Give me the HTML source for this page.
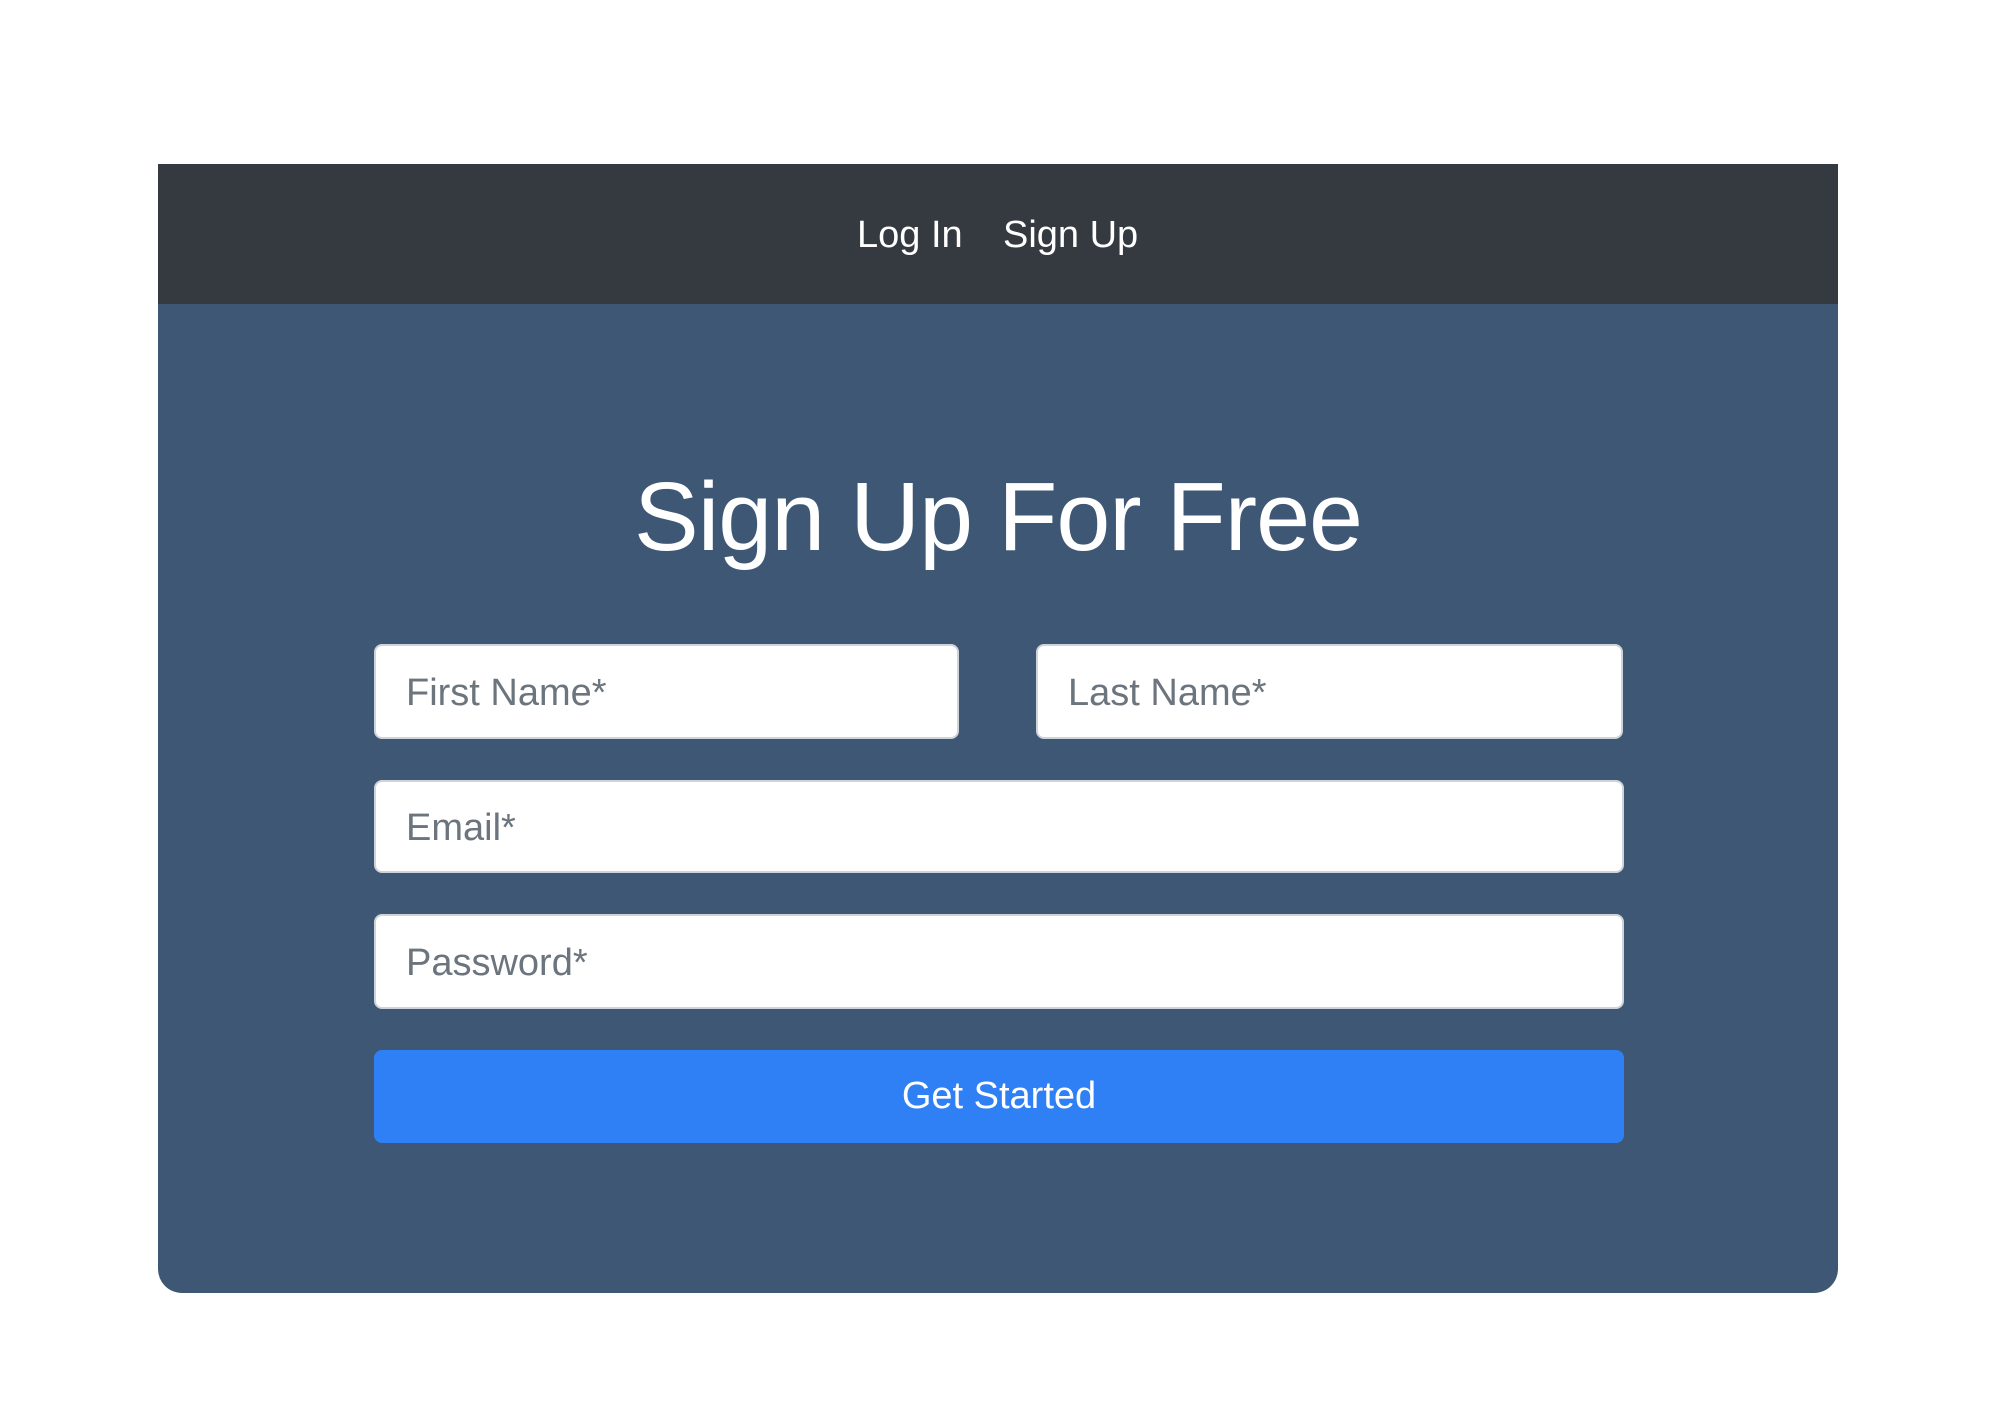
<!DOCTYPE html>
<html><head><style>
html,body{margin:0;padding:0;background:#fff;width:2016px;height:1426px;overflow:hidden;font-family:"Liberation Sans",Arial,sans-serif}
.card{position:absolute;left:158px;top:164px;width:1680px;height:1129px;background:#3e5774;border-radius:0 0 24px 24px;overflow:hidden}
.nav{position:absolute;left:0;top:0;width:100%;height:140px;background:#343a40}
.nav span{position:absolute;top:49px;color:#fff;font-size:38px;line-height:44px}
h1{position:absolute;left:0;width:100%;top:298px;margin:0;text-align:center;color:#fff;font-weight:normal;font-size:97px;line-height:110px;letter-spacing:-1px}
.in{position:absolute;background:#fff;border:2px solid #ced4da;border-radius:8px;box-sizing:border-box;color:#6c757d;font-size:38px;padding-left:30px;padding-top:3px;display:flex;align-items:center}
.btn{position:absolute;left:216px;top:886px;width:1250px;height:93px;background:#2f80f5;border-radius:8px;color:#fff;font-size:38px;display:flex;align-items:center;justify-content:center}
</style></head><body>
<div class="card">
<div class="nav"><span style="left:699px">Log In</span><span style="left:845px">Sign Up</span></div>
<h1>Sign Up For Free</h1>
<div class="in" style="left:216px;top:480px;width:585px;height:95px">First Name*</div>
<div class="in" style="left:878px;top:480px;width:587px;height:95px">Last Name*</div>
<div class="in" style="left:216px;top:616px;width:1250px;height:93px">Email*</div>
<div class="in" style="left:216px;top:750px;width:1250px;height:95px">Password*</div>
<div class="btn">Get Started</div>
</div>
</body></html>
